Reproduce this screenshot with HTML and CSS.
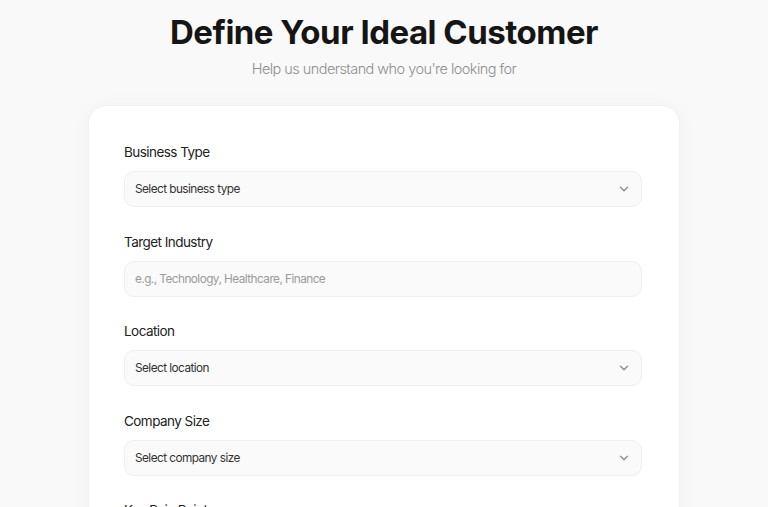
FILE: index.html
```
<!DOCTYPE html>
<html>
<head>
<meta charset="utf-8">
<link rel="stylesheet" href="styles.css">
</head>
<body>
<main class="page">
  <header class="hero">
    <h1 class="title">Define Your Ideal Customer</h1>
    <p class="subtitle">Help us understand who you're looking for</p>
  </header>
  <section class="card">
    <div class="field">
      <label class="label">Business Type</label>
      <div class="control select"><span>Select business type</span>
        <svg class="chev" width="10" height="6" viewBox="0 0 10 6" fill="none" stroke="#8a8a8a" stroke-width="1.3" stroke-linecap="round" stroke-linejoin="round"><path d="M1.5 1.2l3.5 3.5 3.5-3.5"/></svg>
      </div>
    </div>
    <div class="field">
      <label class="label">Target Industry</label>
      <div class="control input"><span class="ph">e.g., Technology, Healthcare, Finance</span></div>
    </div>
    <div class="field">
      <label class="label">Location</label>
      <div class="control select"><span>Select location</span>
        <svg class="chev" width="10" height="6" viewBox="0 0 10 6" fill="none" stroke="#8a8a8a" stroke-width="1.3" stroke-linecap="round" stroke-linejoin="round"><path d="M1.5 1.2l3.5 3.5 3.5-3.5"/></svg>
      </div>
    </div>
    <div class="field">
      <label class="label">Company Size</label>
      <div class="control select"><span>Select company size</span>
        <svg class="chev" width="10" height="6" viewBox="0 0 10 6" fill="none" stroke="#8a8a8a" stroke-width="1.3" stroke-linecap="round" stroke-linejoin="round"><path d="M1.5 1.2l3.5 3.5 3.5-3.5"/></svg>
      </div>
    </div>
    <div class="field">
      <label class="label">Key Pain Points</label>
      <div class="control input"><span class="ph">Describe the challenges your customers face</span></div>
    </div>
  </section>
</main>
</body>
</html>
```

FILE: styles.css
```
* { box-sizing: border-box; }
html, body { margin: 0; padding: 0; }
body {
  background: #f9f9f9;
  font-family: Inter, "Noto Sans", sans-serif;
  color: #1a1a1a;
  overflow: hidden;
  height: 507px;
}
.page {
  display: flex;
  flex-direction: column;
  align-items: center;
  padding-top: 11px;
}
.hero { text-align: center; }
.title {
  margin: 0;
  font-size: 33px;
  font-weight: 700;
  letter-spacing: -0.5px;
  line-height: 42px;
  color: #151515;
}
.subtitle {
  margin: 6px 0 0;
  font-size: 14.5px;
  font-weight: 300;
  letter-spacing: -0.55px;
  line-height: 20px;
  color: #8f8f8f;
}
.card {
  margin-top: 26px;
  width: 592px;
  background: #fff;
  border: 1px solid #f0f0f0;
  border-radius: 18px;
  padding: 37px 37px 37px 35px;
  box-shadow: 0 2px 24px rgba(0,0,0,0.035);
  display: flex;
  flex-direction: column;
  gap: 25.5px;
}
.field { display: flex; flex-direction: column; gap: 10px; }
.label {
  font-size: 13.5px;
  letter-spacing: -0.55px;
  line-height: 18px;
  color: #222;
}
.control {
  height: 36px;
  border: 1px solid #efefef;
  background: #fafafa;
  border-radius: 10px;
  padding: 0 12px 0 10px;
  display: flex;
  align-items: center;
  justify-content: space-between;
  font-size: 11.8px;
  letter-spacing: -0.55px;
  color: #333;
}
.ph { color: #9a9a9a; }
.chev { flex: none; }
```
